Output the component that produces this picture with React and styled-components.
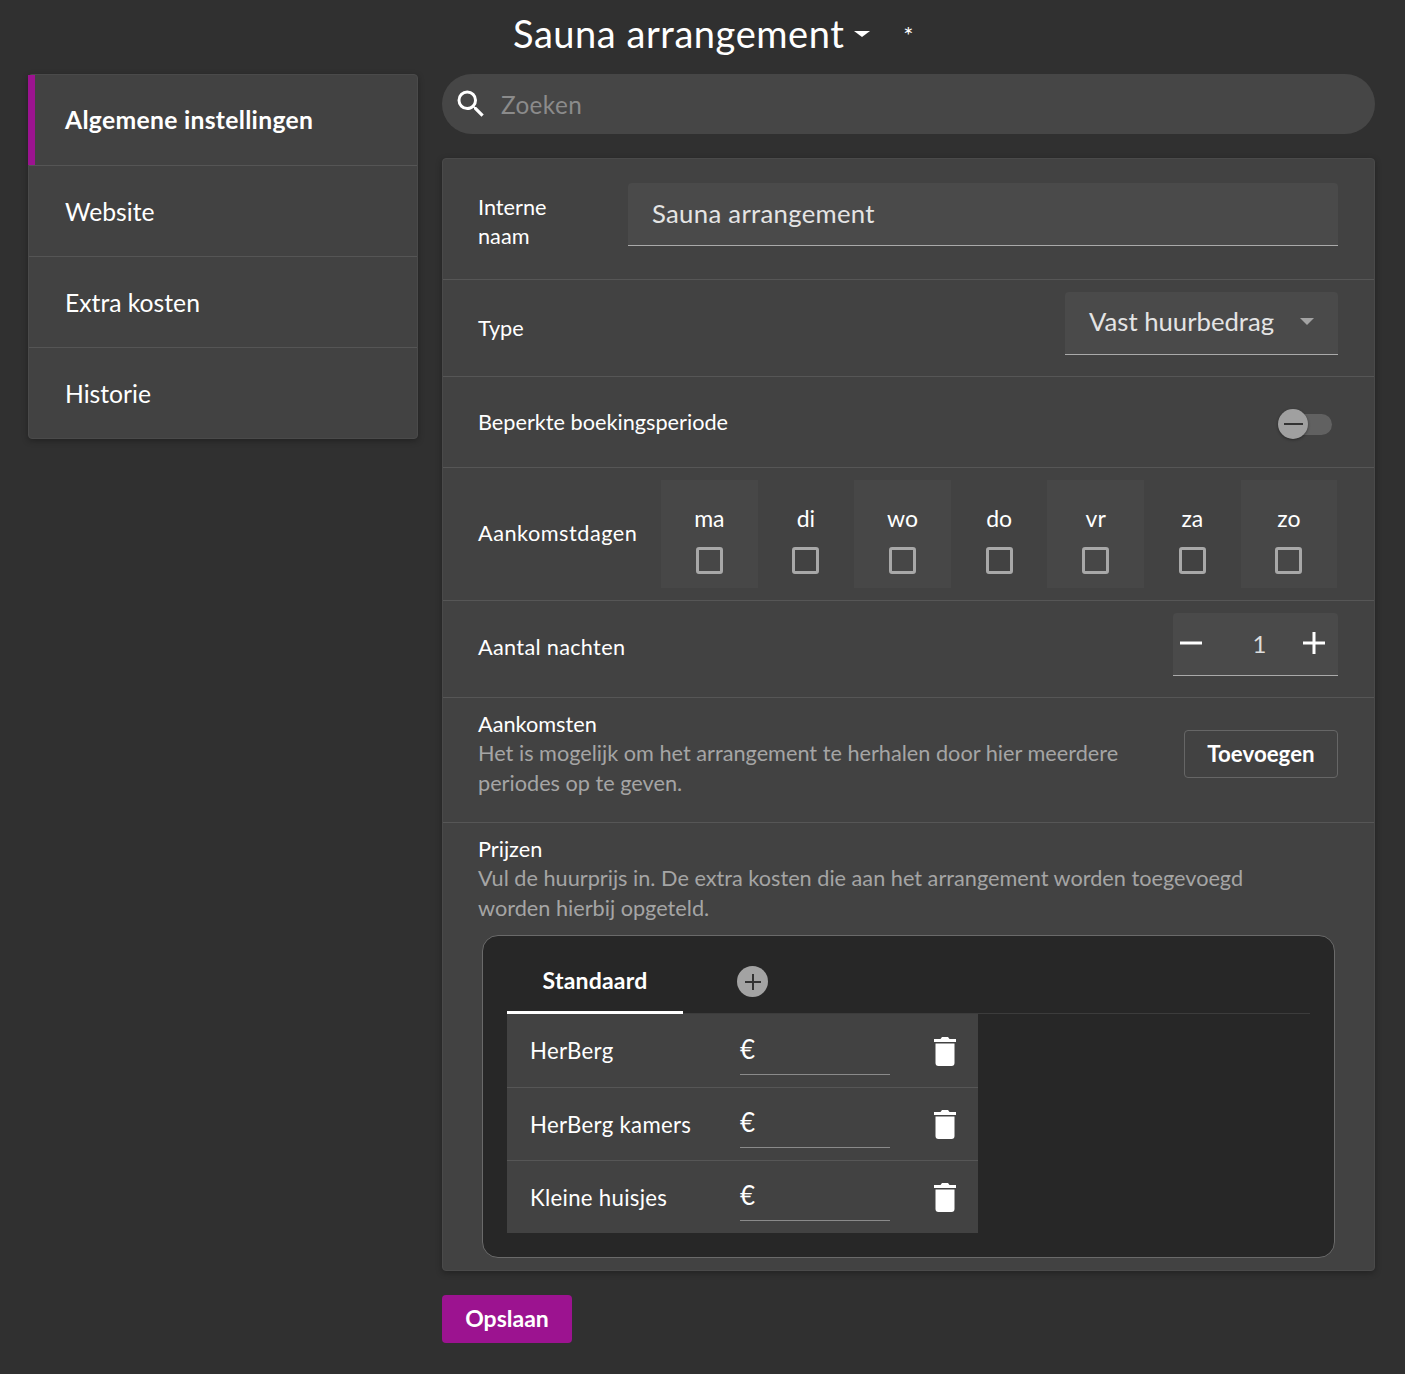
import React from 'react';
import styled, { createGlobalStyle } from 'styled-components';

const Global = createGlobalStyle`
  html, body { margin: 0; padding: 0; background: #303030; }
  body { font-family: "Lato", "Noto Sans", sans-serif; color: #fff; }
  * { box-sizing: border-box; }
`;

const Page = styled.div`
  width: 1405px;
  height: 1374px;
  padding: 0 30px 0 28px;
  background: #303030;
`;
const Header = styled.header`
  height: 74px;
  padding-left: 485px;
  display: flex;
  align-items: flex-start;
`;
const Title = styled.h1`
  margin: 10px 0 0;
  font-size: 38px;
  line-height: 46px;
  font-weight: 400;
  letter-spacing: 0.55px;
  color: #fff;
`;
const Caret = styled.span`
  width: 0;
  height: 0;
  margin: 31px 0 0 10px;
  border-left: 8px solid transparent;
  border-right: 8px solid transparent;
  border-top: 6px solid #fff;
`;
const Star = styled.span`
  margin: 21px 0 0 33px;
  font-size: 24px;
  line-height: 28px;
`;
const Columns = styled.div`
  display: grid;
  grid-template-columns: 390px 933px;
  gap: 24px;
  align-items: start;
`;
const Sidebar = styled.nav`
  background: #424242;
  border: 1px solid #4a4a4a;
  border-radius: 4px;
  box-shadow: 0 2px 6px rgba(0,0,0,.3);
`;
const SideItem = styled.div`
  height: ${p => p.$active ? '90px' : '91px'};
  margin-left: ${p => p.$active ? '-1px' : '0'};
  padding: ${p => p.$active ? '0 0 2px 30px' : '0 0 0 36px'};
  display: flex;
  align-items: center;
  font-size: 24.7px;
  letter-spacing: ${p => p.$active ? '0.3px' : '0'};
  font-weight: ${p => p.$active ? 700 : 400};
  color: #fff;
  border-left: ${p => p.$active ? '7px solid #9c1390' : 'none'};
  & + & { border-top: 1px solid #555; }
`;
const Main = styled.main`
  display: flex;
  flex-direction: column;
`;
const Search = styled.div`
  height: 60px;
  border-radius: 30px;
  background: #464646;
  display: flex;
  align-items: center;
  padding-left: 11px;
  gap: 12px;
  margin-bottom: 24px;
`;
const SearchText = styled.span`
  font-size: 24.3px;
  color: #8b8b8b;
  letter-spacing: .4px;
`;
const Card = styled.section`
  height: 1113px;
  background: #424242;
  border: 1px solid #4a4a4a;
  border-radius: 4px;
  box-shadow: 0 2px 6px rgba(0,0,0,.3);
`;
const Row = styled.div`
  height: ${p => p.$h}px;
  padding: ${p => p.$pad || '0 36px 0 35px'};
  display: flex;
  align-items: ${p => p.$align || 'center'};
  justify-content: space-between;
  & + & { border-top: 1px solid #565656; }
`;
const BlockRow = styled(Row)`
  display: block;
`;
const Label = styled.div`
  font-size: 21.7px;
  line-height: 29px;
  letter-spacing: ${p => p.$ls || 0}px;
  color: #fff;
  width: ${p => p.$w || 'auto'};
  padding-top: ${p => p.$top || 0}px;
  flex: none;
`;
const Field = styled.div`
  background: #4a4a4a;
  border-bottom: 1px solid #aaa;
  border-radius: 4px 4px 0 0;
  height: 63px;
  display: flex;
  align-items: center;
  color: #e4e4e4;
  font-size: 25.7px;
`;
const NameField = styled(Field)`
  flex: 1;
  padding: 0 24px 2px;
  letter-spacing: .3px;
`;
const SelectField = styled(Field)`
  width: 273px;
  padding: 0 24px 4px;
  justify-content: space-between;
`;
const SelectCaret = styled.span`
  width: 0;
  height: 0;
  border-left: 7.5px solid transparent;
  border-right: 7.5px solid transparent;
  border-top: 7px solid #a3a3a3;
`;
const Track = styled.div`
  position: relative;
  width: 48px;
  height: 21px;
  margin: 5px 6px 0 0;
  border-radius: 11px;
  background: #616161;
`;
const Thumb = styled.div`
  position: absolute;
  left: -6px;
  top: -5px;
  width: 30px;
  height: 30px;
  border-radius: 50%;
  background: #a0a0a0;
  box-shadow: 0 1px 3px rgba(0,0,0,.4);
  display: flex;
  align-items: center;
  justify-content: center;
  &::after { content: ""; width: 19px; height: 2px; background: #333; }
`;
const Days = styled.div`
  display: grid;
  grid-template-columns: repeat(7, 96.6px);
  margin-right: 0.8px;
`;
const Day = styled.div`
  height: 108px;
  display: flex;
  flex-direction: column;
  align-items: center;
  padding-top: 23px;
  font-size: 23px;
  line-height: 30px;
  background: ${p => p.$odd ? '#474747' : 'transparent'};
`;
const Box = styled.span`
  margin-top: 14px;
  width: 27px;
  height: 27px;
  border: 3px solid #a8a8a8;
  border-radius: 3px;
`;
const Stepper = styled(Field)`
  width: 165px;
  padding: 0 13px 2px 7px;
  justify-content: space-between;
  color: #ddd;
`;
const StepValue = styled.span`
  font-size: 24px;
  padding-left: 14px;
`;
const TextBlock = styled.div`
  font-size: 21.7px;
  line-height: 29.5px;
  width: ${p => p.$w};
`;
const Muted = styled.div`
  color: #a5a5a5;
  margin-top: -0.5px;
`;
const OutlineButton = styled.button`
  font: 700 22.3px "Lato", sans-serif;
  width: 154px;
  height: 48px;
  margin-top: 20px;
  padding: 0 0 2px;
  color: #fff;
  background: transparent;
  border: 1px solid #666;
  border-radius: 4px;
  flex: none;
`;
const Inner = styled.div`
  margin: 12px 3px 0 4px;
  height: 323px;
  background: #272727;
  border: 1px solid #6a6a6a;
  border-radius: 16px;
  padding: 0 24px;
`;
const Tabs = styled.div`
  height: 78px;
  display: flex;
  border-bottom: 1px solid #3c3c3c;
`;
const Tab = styled.div`
  width: 176px;
  height: 78px;
  display: flex;
  align-items: center;
  justify-content: center;
  padding-top: 12px;
  border-bottom: 3px solid #fff;
  font-size: 23px;
  font-weight: 700;
  letter-spacing: .2px;
`;
const AddCircle = styled.div`
  width: 31px;
  height: 31px;
  margin: 30px 0 0 54px;
  border-radius: 50%;
  background: #a3a3a3;
  display: flex;
  align-items: center;
  justify-content: center;
`;
const PriceTable = styled.div`
  width: 471px;
  background: #424242;
`;
const PriceRow = styled.div`
  height: 73px;
  display: flex;
  align-items: center;
  padding-left: 23px;
  & + & { border-top: 1px solid #565656; }
`;
const PriceName = styled.div`
  width: 210px;
  font-size: 22.2px;
  letter-spacing: .3px;
`;
const Euro = styled.div`
  width: 150px;
  height: 48px;
  margin: 4px 0 4px;
  padding-top: 7px;
  border-bottom: 1px solid #8a8a8a;
  font-size: 26px;
  line-height: 30px;
`;
const Trash = styled.svg`
  margin: 1px 0 0 44px;
  width: 22px;
  height: 29px;
`;
const Save = styled.button`
  margin-top: 24px;
  width: 130px;
  height: 48px;
  padding: 0 0 2px;
  background: #9c1390;
  color: #fff;
  border: none;
  border-radius: 4px;
  font: 700 23px "Lato", sans-serif;
`;

const TrashIcon = () => (
  <Trash viewBox="0 0 22 29">
    <path fill="#fff" d="M0 2h6.5L8 0h6l1.5 2H22v3H0zM1.5 6.5h19V26a3 3 0 0 1-3 3h-13a3 3 0 0 1-3-3z" />
  </Trash>
);

const days = ['ma', 'di', 'wo', 'do', 'vr', 'za', 'zo'];
const PAD = '12px 36px 0 35px';

export default function App() {
  return (
    <Page>
      <Global />
      <Header>
        <Title>Sauna arrangement</Title>
        <Caret />
        <Star>*</Star>
      </Header>
      <Columns>
        <Sidebar>
          <SideItem $active>Algemene instellingen</SideItem>
          <SideItem>Website</SideItem>
          <SideItem>Extra kosten</SideItem>
          <SideItem>Historie</SideItem>
        </Sidebar>
        <Main>
          <Search>
            <svg width="36" height="36" viewBox="0 0 24 24"><path fill="#fff" d="M15.5 14h-.79l-.28-.27A6.47 6.47 0 0 0 16 9.5 6.5 6.5 0 1 0 9.5 16c1.61 0 3.09-.59 4.23-1.57l.27.28v.79l5 4.99L20.49 19l-4.99-5zm-6 0C7.01 14 5 11.99 5 9.5S7.01 5 9.5 5 14 7.01 14 9.5 11.99 14 9.5 14z"/></svg>
            <SearchText>Zoeken</SearchText>
          </Search>
          <Card>
            <Row $h={120} $align="flex-start" $pad="24px 36px 0 35px">
              <Label $w="150px" $top={10}>Interne<br />naam</Label>
              <NameField>Sauna arrangement</NameField>
            </Row>
            <Row $h={97} $pad={PAD} $align="flex-start">
              <Label $top={22}>Type</Label>
              <SelectField>Vast huurbedrag<SelectCaret /></SelectField>
            </Row>
            <Row $h={91}>
              <Label>Beperkte boekingsperiode</Label>
              <Track><Thumb /></Track>
            </Row>
            <Row $h={133} $pad={PAD} $align="flex-start">
              <Label $top={39} $ls={0.5}>Aankomstdagen</Label>
              <Days>
                {days.map((d, i) => (
                  <Day key={d} $odd={i % 2 === 0}>{d}<Box /></Day>
                ))}
              </Days>
            </Row>
            <Row $h={97} $pad={PAD} $align="flex-start">
              <Label $top={20} $ls={0.3}>Aantal nachten</Label>
              <Stepper>
                <svg width="22" height="22" viewBox="0 0 22 22"><path stroke="#fff" strokeWidth="3" d="M0 11h22" /></svg>
                <StepValue>1</StepValue>
                <svg width="22" height="22" viewBox="0 0 22 22"><path stroke="#fff" strokeWidth="3" d="M0 11h22M11 0v22" /></svg>
              </Stepper>
            </Row>
            <Row $h={125} $pad={PAD} $align="flex-start">
              <TextBlock $w="680px">
                Aankomsten
                <Muted>Het is mogelijk om het arrangement te herhalen door hier meerdere periodes op te geven.</Muted>
              </TextBlock>
              <OutlineButton>Toevoegen</OutlineButton>
            </Row>
            <BlockRow $h={448} $pad={PAD}>
              <TextBlock $w="790px">
                Prijzen
                <Muted>Vul de huurprijs in. De extra kosten die aan het arrangement worden toegevoegd worden hierbij opgeteld.</Muted>
              </TextBlock>
              <Inner>
                <Tabs>
                  <Tab>Standaard</Tab>
                  <AddCircle>
                    <svg width="20" height="20" viewBox="0 0 20 20"><path stroke="#333" strokeWidth="2" d="M2 10h16M10 2v16" /></svg>
                  </AddCircle>
                </Tabs>
                <PriceTable>
                  {['HerBerg', 'HerBerg kamers', 'Kleine huisjes'].map(n => (
                    <PriceRow key={n}>
                      <PriceName>{n}</PriceName>
                      <Euro>€</Euro>
                      <TrashIcon />
                    </PriceRow>
                  ))}
                </PriceTable>
              </Inner>
            </BlockRow>
          </Card>
          <Save>Opslaan</Save>
        </Main>
      </Columns>
    </Page>
  );
}
